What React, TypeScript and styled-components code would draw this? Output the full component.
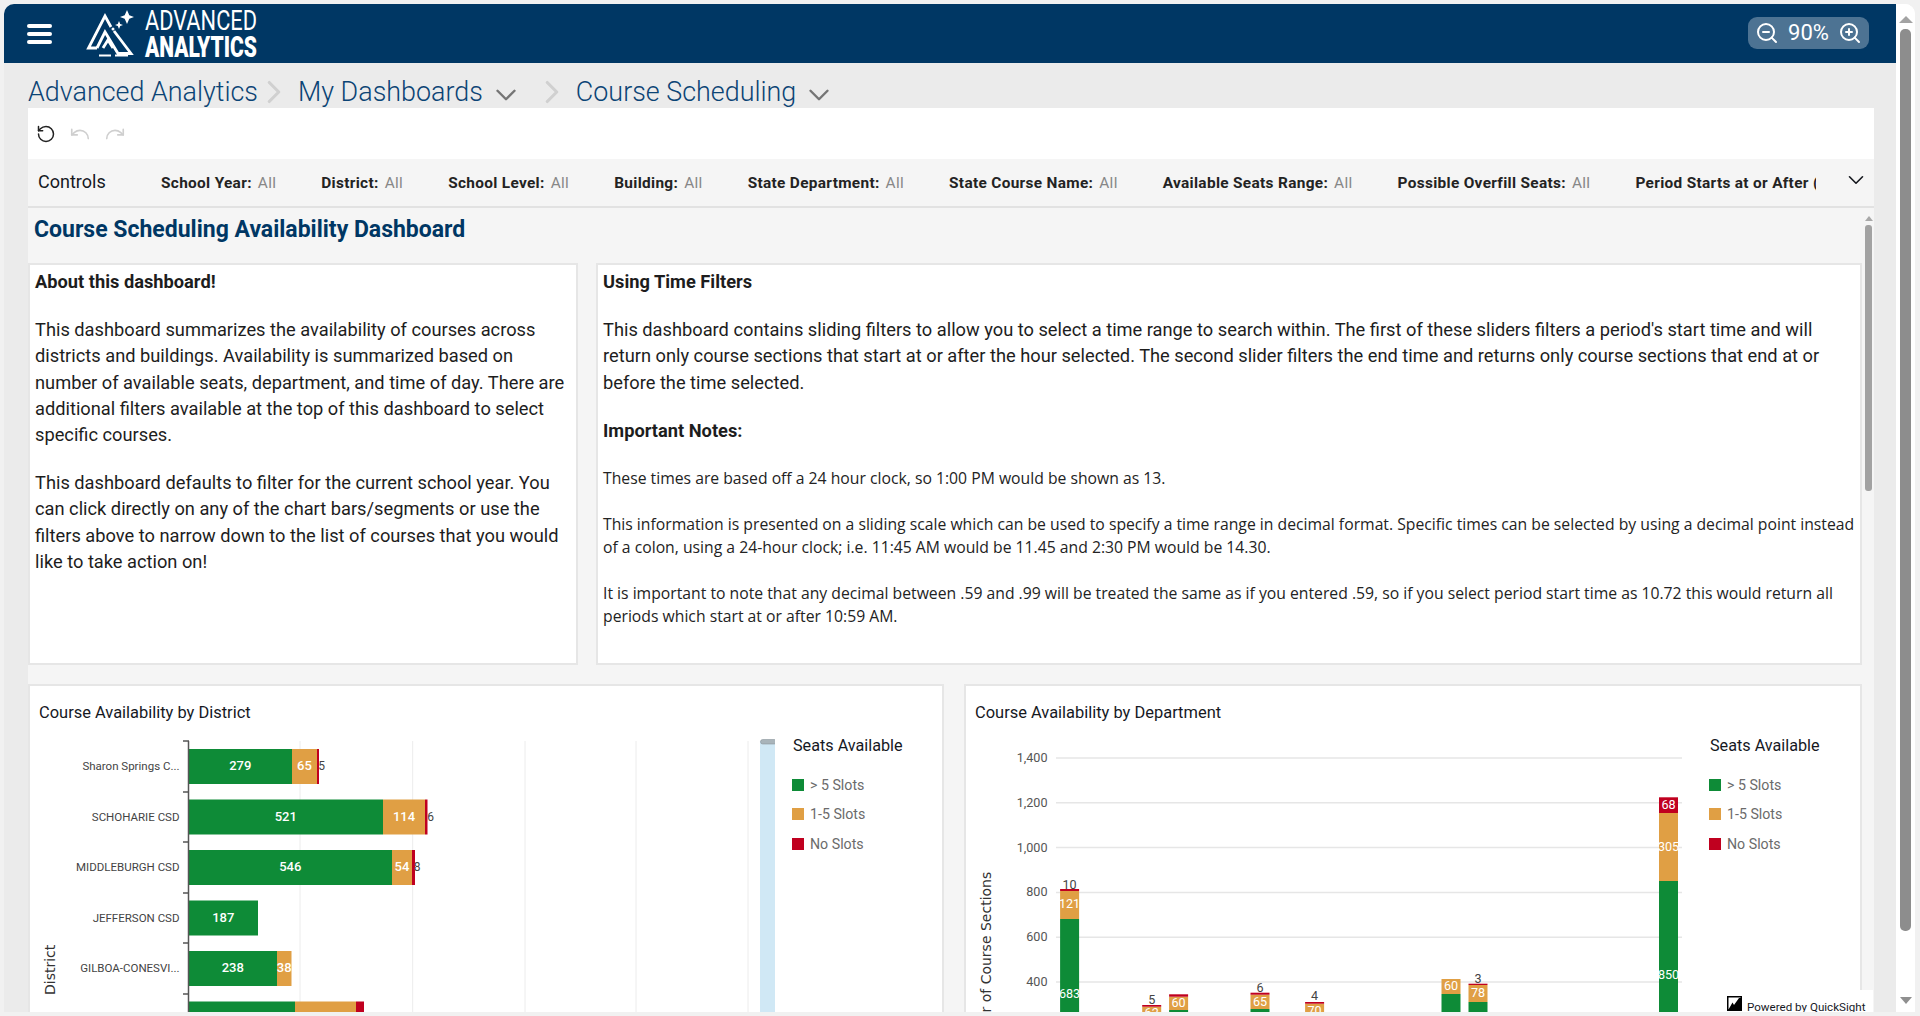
import React from "react";
import styled, { createGlobalStyle } from "styled-components";
import { ChevronDown, ChevronRight, RotateCcw, Undo, Redo, ZoomIn, ZoomOut } from "lucide-react";

const GREEN = "#0e8b37";
const ORANGE = "#e09f44";
const RED = "#c0001f";
const NAVY = "#003764";
const UI_FONT = `"Roboto", "Liberation Sans", sans-serif`;

const GlobalStyle = createGlobalStyle`
  html, body {
    margin: 0;
    height: 100%;
    overflow: hidden;
    background: #f1f1f1;
    font-family: ${UI_FONT};
  }
  #root { height: 100%; }
`;

const Page = styled.div`
  box-sizing: border-box;
  height: 1016px;
  padding: 4px 5px 4px 4px;
`;

const Win = styled.div`
  display: flex;
  height: 100%;
  overflow: hidden;
  border-radius: 10px 10px 0 0;
  background: #fff;
`;

const Main = styled.div`
  flex: 1;
  min-width: 0;
  display: flex;
  flex-direction: column;
  background: #ebebeb;
`;

const Header = styled.header`
  flex: none;
  height: 59px;
  display: flex;
  align-items: center;
  background: ${NAVY};
  padding: 0 27px 0 23px;
`;

const Burger = styled.div`
  width: 25px;
  height: 20px;
  display: flex;
  flex-direction: column;
  justify-content: space-between;
  span {
    height: 4px;
    border-radius: 2px;
    background: #fff;
  }
`;

const ZoomBox = styled.div`
  margin-left: auto;
  width: 121px;
  height: 32px;
  margin-top: -2px;
  border-radius: 9px;
  background: #4d7393;
  color: #fff;
  display: flex;
  align-items: center;
  justify-content: space-between;
  padding: 0 7px;
  box-sizing: border-box;
  font-size: 22px;
`;

const Crumbs = styled.nav`
  flex: none;
  height: 45px;
  display: flex;
  align-items: center;
  padding: 12px 0 0 24px;
  color: #0b4475;
  font-size: 26.9px;
  font-weight: 300;
  box-sizing: border-box;
`;

const Crumb = styled.span`
  white-space: nowrap;
`;

const CrumbSep = styled(ChevronRight)`
  flex: none;
  color: #d0d0d0;
  margin: 0 5px 0 -3px;
`;

const CrumbDrop = styled(ChevronDown)`
  flex: none;
  color: #757575;
  margin: 6px 13px 0 6px;
`;

const Sheet = styled.div`
  flex: 1;
  min-height: 0;
  margin: 0 22px 0 24px;
  display: flex;
  flex-direction: column;
  background: #f5f5f5;
  position: relative;
`;

const Toolbar = styled.div`
  flex: none;
  height: 51px;
  background: #fff;
  display: flex;
  align-items: center;
  gap: 13px;
  padding: 0 0 0 8px;
`;

const Controls = styled.div`
  flex: none;
  height: 47px;
  display: flex;
  align-items: center;
  border-bottom: 2px solid #e2e2e2;
  position: relative;
  overflow: hidden;
  box-sizing: content-box;
`;

const ControlsLabel = styled.span`
  flex: none;
  width: 133px;
  padding: 0 0 2px 10px;
  box-sizing: border-box;
  font-size: 18px;
  color: #16191f;
`;

const FilterRow = styled.div`
  flex: 1;
  min-width: 0;
  display: flex;
  gap: 45px;
  overflow: hidden;
  margin-right: 58px;
`;

const Filter = styled.div`
  flex: none;
  font-size: 15.4px;
  letter-spacing: 0.32px;
  font-weight: 700;
  color: #232323;
  white-space: nowrap;
  em {
    font-style: normal;
    font-weight: 400;
    color: #878787;
    margin-left: 6px;
  }
`;

const ControlsToggle = styled(ChevronDown)`
  position: absolute;
  right: 5px;
  top: 8px;
  color: #16191f;
`;

const ScrollWrap = styled.div`
  flex: 1;
  min-height: 0;
  display: flex;
  overflow: hidden;
`;

const Content = styled.div`
  flex: 1;
  min-width: 0;
  padding-right: 2px;
`;

const Title = styled.h1`
  margin: 0;
  height: 55px;
  padding: 8px 0 0 6px;
  box-sizing: border-box;
  font-size: 23px;
  line-height: 27px;
  font-weight: 700;
  color: ${NAVY};
`;

const TextRow = styled.div`
  display: flex;
  gap: 18px;
  height: 402px;
`;

const Panel = styled.section<{ $w?: number }>`
  ${(p) => (p.$w ? `flex: none; width: ${p.$w}px;` : "flex: 1; min-width: 0;")}
  box-sizing: border-box;
  border: 2px solid #e6e6e6;
  background: #fff;
  padding: 4px 0 0 5px;
  color: #1d1d1d;
  font-size: 18.25px;
  line-height: 26.2px;
  h3 {
    margin: 0;
    font-size: 18.25px;
    font-weight: 700;
  }
  p {
    margin: 22px 0 0;
  }
`;

const NotesHead = styled.h3`
  && {
    margin-top: 22px;
  }
`;

const Note = styled.p`
  && {
    margin: 23px 0 0;
  }
  font-family: "Open Sans", sans-serif;
  font-size: 15.74px;
  line-height: 23px;
  color: #232323;
`;

const ChartRow = styled.div`
  display: flex;
  gap: 20px;
  margin-top: 19px;
  height: 340px;
`;

const Card = styled.section<{ $w?: number }>`
  ${(p) => (p.$w ? `flex: none; width: ${p.$w}px;` : "flex: 1; min-width: 0;")}
  box-sizing: border-box;
  border: 2px solid #e6e6e6;
  background: #fff;
  overflow: hidden;
`;

const CardTitle = styled.h2`
  margin: 17px 0 12px 9px;
  font-size: 16.45px;
  line-height: 20px;
  font-weight: 400;
  color: #16191f;
`;

const ChartBody = styled.div`
  display: flex;
`;

const Legend = styled.div<{ $gap: number }>`
  margin-left: ${(p) => p.$gap}px;
  white-space: nowrap;
`;

const LegendTitle = styled.div`
  margin: 1px 0 14px 1px;
  font-size: 16.2px;
  line-height: 20px;
  color: #16191f;
`;

const LegendItem = styled.div<{ $c: string }>`
  display: flex;
  align-items: center;
  height: 29.6px;
  font-size: 14.2px;
  color: #6b6b6b;
  &::before {
    content: "";
    width: 12px;
    height: 12px;
    margin-right: 6px;
    background: ${(p) => p.$c};
  }
`;

const Powered = styled.div`
  position: absolute;
  right: 1px;
  bottom: 0;
  width: 156px;
  height: 22px;
  background: #fff;
  display: flex;
  align-items: flex-start;
  gap: 5px;
  padding: 6px 0 0 10px;
  box-sizing: border-box;
  font-size: 11.6px;
  color: #16191f;
  white-space: nowrap;
`;

const PoweredText = styled.span`
  line-height: 16px;
  margin-top: 3px;
`;

const InnerBar = styled.div`
  flex: none;
  width: 9px;
  margin-right: 1px;
  display: flex;
  flex-direction: column;
  align-items: center;
  padding-top: 8px;
  &::before {
    content: "";
    border: 4px solid transparent;
    border-top: 0;
    border-bottom: 5px solid #a8a8a8;
  }
  &::after {
    content: "";
    margin-top: 4px;
    width: 7px;
    height: 266px;
    border-radius: 3px;
    background: #a2a2a2;
  }
`;

const PageBar = styled.div`
  flex: none;
  width: 19px;
  background: #fff;
  display: flex;
  flex-direction: column;
  align-items: center;
  padding-top: 12px;
  box-sizing: border-box;
  position: relative;
  &::before {
    content: "";
    border: 7px solid transparent;
    border-top: 0;
    border-bottom: 7px solid #a3a3a3;
  }
  &::after {
    content: "";
    position: absolute;
    bottom: 8px;
    border: 6px solid transparent;
    border-bottom: 0;
    border-top: 7px solid #8f8f8f;
  }
`;

const PageThumb = styled.div`
  margin-top: 6px;
  width: 11px;
  height: 902px;
  border-radius: 5px;
  background: #8d8d8d;
`;

const LogoSvg = styled.svg`
  flex: none;
  margin-left: 12px;
`;

const Logo = () => (
  <LogoSvg width="194" height="59" viewBox="64 4 194 59">
    <g fill="none" stroke="#fff" strokeWidth="2.8">
      <path d="M97 48 H88.5 L105 16 L111 27" />
      <path d="M114 31 L131 53.5 H118 L105 32 L97 48" />
      <path d="M103 48 L108 40 L113 48" />
      <path d="M99 55.5 H111 M115 55.5 H128" strokeWidth="2.2" />
    </g>
    <path
      d="M127 10 L129.3 15.2 L134 17 L129.3 18.8 L127 24 L124.7 18.8 L120 17 L124.7 15.2Z M119 21 L120.2 24 L123 25 L120.2 26 L119 29 L117.8 26 L115 25 L117.8 24Z"
      fill="#fff"
    />
    <circle cx="113" cy="29" r="1.5" fill="#fff" />
    <text x="145" y="30" fontFamily="Roboto" fontSize="28.5" fill="#fff" textLength="112" lengthAdjust="spacingAndGlyphs">
      ADVANCED
    </text>
    <text x="145" y="57" fontFamily="Roboto" fontWeight="900" fontSize="29" fill="#fff" textLength="112" lengthAdjust="spacingAndGlyphs">
      ANALYTICS
    </text>
  </LogoSvg>
);

type Seg = { to: number; color: string; label?: string };
type Row = { name: string; y: number; segs: Seg[]; out?: [string, number] };

const districts: Row[] = [
  { name: "Sharon Springs C...", y: 749, out: ["5", 321.5], segs: [
    { to: 292, color: GREEN, label: "279" }, { to: 317, color: ORANGE, label: "65" }, { to: 319, color: RED } ] },
  { name: "SCHOHARIE CSD", y: 799.5, out: ["6", 430.5], segs: [
    { to: 383, color: GREEN, label: "521" }, { to: 425, color: ORANGE, label: "114" }, { to: 427.5, color: RED } ] },
  { name: "MIDDLEBURGH CSD", y: 850, out: ["8", 417], segs: [
    { to: 392, color: GREEN, label: "546" }, { to: 412, color: ORANGE, label: "54" }, { to: 415, color: RED } ] },
  { name: "JEFFERSON CSD", y: 900.5, segs: [{ to: 258, color: GREEN, label: "187" }] },
  { name: "GILBOA-CONESVI...", y: 951, segs: [
    { to: 277, color: GREEN, label: "238" }, { to: 291.5, color: ORANGE, label: "38" } ] },
  { name: "", y: 1001.5, segs: [
    { to: 295, color: GREEN }, { to: 356, color: ORANGE }, { to: 364, color: RED } ] },
];

const AXIS_X = 188.5;
const BAR_H = 35;

const DistrictChart = () => (
  <svg width="745" height="280" viewBox="30 735 745 280" fontFamily="Roboto">
    {[300, 412.7, 525, 636, 748].map((x) => (
      <line key={x} x1={x} x2={x} y1={741} y2={1015} stroke="#ececec" />
    ))}
    {[741, 792, 842, 893, 943, 994].map((y) => (
      <line key={y} x1={183} x2={189} y1={y} y2={y} stroke="#555" strokeWidth="1.5" />
    ))}
    {districts.map((r) => {
      let from = AXIS_X;
      return (
        <g key={r.y}>
          <text x={179.5} y={r.y + 21} textAnchor="end" fontSize="11.5" fill="#444">
            {r.name}
          </text>
          {r.segs.map((s) => {
            const x = from;
            from = s.to;
            return (
              <g key={s.color}>
                <rect x={x} y={r.y} width={s.to - x} height={BAR_H} fill={s.color} />
                {s.label && (
                  <text x={(x + s.to) / 2} y={r.y + 21} textAnchor="middle" fontSize="13" fontWeight="500" fill="#fff">
                    {s.label}
                  </text>
                )}
              </g>
            );
          })}
          {r.out && (
            <text x={r.out[1]} y={r.y + 21} textAnchor="middle" fontSize="12" fill="#444">
              {r.out[0]}
            </text>
          )}
        </g>
      );
    })}
    <line x1={AXIS_X} x2={AXIS_X} y1={741} y2={1015} stroke="#555" strokeWidth="1.5" />
    <text transform="translate(55 995) rotate(-90)" fontFamily="DejaVu Sans" fontSize="14" fill="#333">
      District
    </text>
    <rect x={760} y={741} width={17} height={280} fill="#d0e8f5" />
    <rect x={760.5} y={739.5} width={16} height={4.5} rx={2.2} fill="#a9b4ba" stroke="#8a969c" strokeWidth="0.6" />
  </svg>
);

const yOf = (v: number) => 1071.6 - v * 0.224;

type Stack = {
  cx: number;
  parts: { top: number; bottom: number; color: string; label?: string; ly?: number }[];
  over?: [string, number];
};

const stacks: Stack[] = [
  { cx: 1069.6, over: ["10", 890], parts: [
    { top: 919, bottom: 1020, color: GREEN, label: "683", ly: 998 },
    { top: 891, bottom: 919, color: ORANGE, label: "121", ly: 908 },
    { top: 889, bottom: 891, color: RED } ] },
  { cx: 1151.7, over: ["5", 1005], parts: [
    { top: 1006.7, bottom: 1020, color: ORANGE, label: "62", ly: 1017 },
    { top: 1005, bottom: 1006.7, color: RED } ] },
  { cx: 1178.6, parts: [
    { top: 1010, bottom: 1020, color: GREEN },
    { top: 996.7, bottom: 1010, color: ORANGE, label: "60", ly: 1007 },
    { top: 994.3, bottom: 996.7, color: RED } ] },
  { cx: 1260, over: ["6", 993], parts: [
    { top: 1009, bottom: 1020, color: GREEN },
    { top: 994.7, bottom: 1009, color: ORANGE, label: "65", ly: 1006 },
    { top: 992.7, bottom: 994.7, color: RED } ] },
  { cx: 1314.6, over: ["4", 1001], parts: [
    { top: 1003.7, bottom: 1020, color: ORANGE, label: "70", ly: 1015 },
    { top: 1002, bottom: 1003.7, color: RED } ] },
  { cx: 1451, parts: [
    { top: 994, bottom: 1020, color: GREEN },
    { top: 979, bottom: 994, color: ORANGE, label: "60", ly: 990 } ] },
  { cx: 1478, over: ["3", 984], parts: [
    { top: 1002, bottom: 1020, color: GREEN },
    { top: 985, bottom: 1002, color: ORANGE, label: "78", ly: 997 },
    { top: 983.7, bottom: 985, color: RED } ] },
  { cx: 1668.5, parts: [
    { top: 881, bottom: 1020, color: GREEN, label: "850", ly: 979 },
    { top: 813, bottom: 881, color: ORANGE, label: "305", ly: 851 },
    { top: 797.3, bottom: 813, color: RED, label: "68", ly: 809 } ] },
];

const DepartmentChart = () => (
  <svg width="735" height="280" viewBox="966 735 735 280" fontFamily="Roboto">
    {[1400, 1200, 1000, 800, 600, 400].map((v) => (
      <g key={v}>
        <line x1={1056} x2={1682} y1={yOf(v)} y2={yOf(v)} stroke="#e6e6e6" strokeWidth="1.5" />
        <text x={1047.5} y={yOf(v) + 4} textAnchor="end" fontSize="12.6" fill="#555">
          {v.toLocaleString("en-US")}
        </text>
      </g>
    ))}
    {stacks.map((s) => (
      <g key={s.cx}>
        {s.parts.map((p) => (
          <g key={p.color}>
            <rect x={s.cx - 9.5} y={p.top} width={19} height={p.bottom - p.top} fill={p.color} />
            {p.label && (
              <text x={s.cx} y={p.ly} textAnchor="middle" fontSize="12.6" fill="#fff">
                {p.label}
              </text>
            )}
          </g>
        ))}
        {s.over && (
          <text x={s.cx} y={s.over[1] - 1} textAnchor="middle" fontSize="12.6" fill="#444">
            {s.over[0]}
          </text>
        )}
      </g>
    ))}
    <text transform="translate(991 871.7) rotate(-90)" textAnchor="end" fontFamily="DejaVu Sans" fontSize="14" fill="#333">
      Number of Course Sections
    </text>
  </svg>
);

const SeatsLegend = ({ gap }: { gap: number }) => (
  <Legend $gap={gap}>
    <LegendTitle>Seats Available</LegendTitle>
    <LegendItem $c={GREEN}>&gt; 5 Slots</LegendItem>
    <LegendItem $c={ORANGE}>1-5 Slots</LegendItem>
    <LegendItem $c={RED}>No Slots</LegendItem>
  </Legend>
);

const filters = [
  "School Year:",
  "District:",
  "School Level:",
  "Building:",
  "State Department:",
  "State Course Name:",
  "Available Seats Range:",
  "Possible Overfill Seats:",
];

export default function App() {
  return (
    <Page>
      <GlobalStyle />
      <Win>
        <Main>
          <Header>
            <Burger>
              <span />
              <span />
              <span />
            </Burger>
            <Logo />
            <ZoomBox>
              <ZoomOut size={24} strokeWidth={2} />
              <span>90%</span>
              <ZoomIn size={24} strokeWidth={2} />
            </ZoomBox>
          </Header>
          <Crumbs>
            <Crumb>Advanced Analytics</Crumb>
            <CrumbSep size={38} strokeWidth={2} />
            <Crumb>My Dashboards</Crumb>
            <CrumbDrop size={34} strokeWidth={1.7} />
            <CrumbSep size={38} strokeWidth={2} />
            <Crumb>Course Scheduling</Crumb>
            <CrumbDrop size={34} strokeWidth={1.7} />
          </Crumbs>
          <Sheet>
            <Toolbar>
              <RotateCcw size={20} strokeWidth={1.8} color="#222" />
              <Undo size={22} strokeWidth={1.8} color="#cfcfcf" />
              <Redo size={22} strokeWidth={1.8} color="#cfcfcf" />
            </Toolbar>
            <Controls>
              <ControlsLabel>Controls</ControlsLabel>
              <FilterRow>
                {filters.map((f) => (
                  <Filter key={f}>
                    {f}
                    <em>All</em>
                  </Filter>
                ))}
                <Filter>Period Starts at or After (Hour): All</Filter>
              </FilterRow>
              <ControlsToggle size={26} strokeWidth={1.5} />
            </Controls>
            <ScrollWrap>
              <Content>
                <Title>Course Scheduling Availability Dashboard</Title>
                <TextRow>
                  <Panel $w={550}>
                    <h3>About this dashboard!</h3>
                    <p>
                      This dashboard summarizes the availability of courses across districts and buildings.
                      Availability is summarized based on number of available seats, department, and time of day.
                      There are additional filters available at the top of this dashboard to select specific courses.
                    </p>
                    <p>
                      This dashboard defaults to filter for the current school year. You can click directly on any of
                      the chart bars/segments or use the filters above to narrow down to the list of courses that you
                      would like to take action on!
                    </p>
                  </Panel>
                  <Panel>
                    <h3>Using Time Filters</h3>
                    <p>
                      This dashboard contains sliding filters to allow you to select a time range to search within. The
                      first of these sliders filters a period's start time and will return only course sections that
                      start at or after the hour selected. The second slider filters the end time and returns only
                      course sections that end at or before the time selected.
                    </p>
                    <NotesHead>Important Notes:</NotesHead>
                    <Note>These times are based off a 24 hour clock, so 1:00 PM would be shown as 13.</Note>
                    <Note>
                      This information is presented on a sliding scale which can be used to specify a time range in
                      decimal format. Specific times can be selected by using a decimal point instead of a colon, using
                      a 24-hour clock; i.e. 11:45 AM would be 11.45 and 2:30 PM would be 14.30.
                    </Note>
                    <Note>
                      It is important to note that any decimal between .59 and .99 will be treated the same as if you
                      entered .59, so if you select period start time as 10.72 this would return all periods which start
                      at or after 10:59 AM.
                    </Note>
                  </Panel>
                </TextRow>
                <ChartRow>
                  <Card $w={916}>
                    <CardTitle>Course Availability by District</CardTitle>
                    <ChartBody>
                      <DistrictChart />
                      <SeatsLegend gap={17} />
                    </ChartBody>
                  </Card>
                  <Card>
                    <CardTitle>Course Availability by Department</CardTitle>
                    <ChartBody>
                      <DepartmentChart />
                      <SeatsLegend gap={8} />
                    </ChartBody>
                  </Card>
                </ChartRow>
              </Content>
              <InnerBar />
            </ScrollWrap>
            <Powered>
              <svg width="15" height="15" viewBox="0 0 15 15">
                <path d="M0 0H15V15H0Z" fill="#000" />
                <path d="M1.5 13.5 L5.5 6.5 L7 9 L12 2 L13.5 2 V1.5 H1.5Z" fill="#fff" />
              </svg>
              <PoweredText>Powered by QuickSight</PoweredText>
            </Powered>
          </Sheet>
        </Main>
        <PageBar>
          <PageThumb />
        </PageBar>
      </Win>
    </Page>
  );
}
